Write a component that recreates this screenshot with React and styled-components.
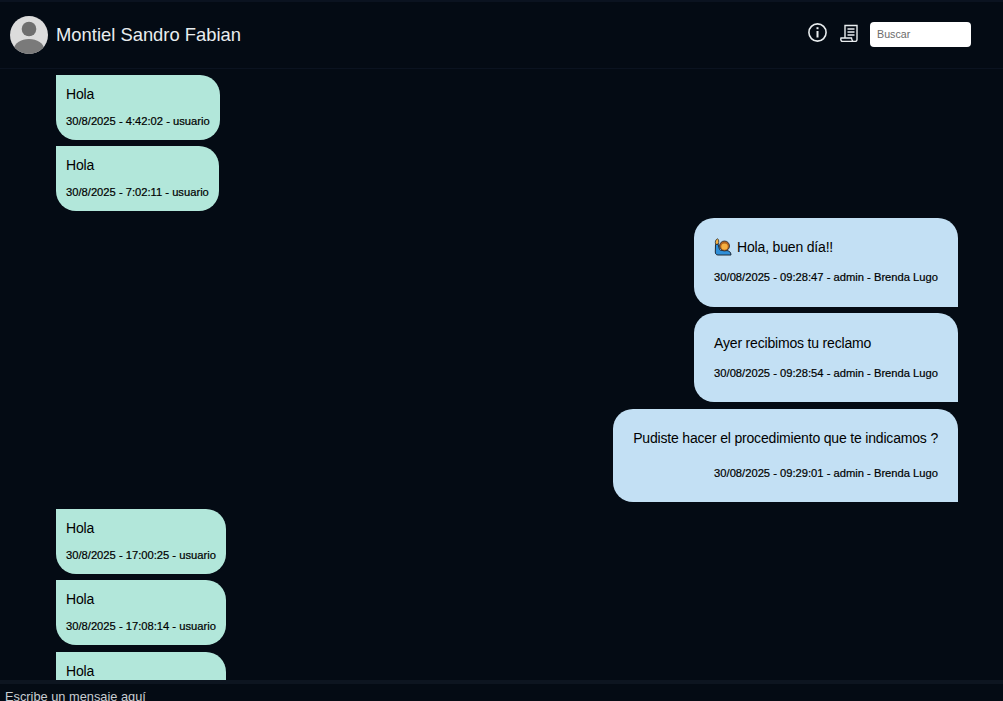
import React from "react";
import styled, { createGlobalStyle } from "styled-components";

const GlobalStyle = createGlobalStyle`
    html, body {
        margin: 0;
        padding: 0;
        height: 100%;
        overflow: hidden;
        background-color: #040b14;
        font-family: "Liberation Sans", Arial, sans-serif;
    }
`;

const Page = styled.div`
    height: 701px;
    display: flex;
    flex-direction: column;
    overflow: hidden;
    background-color: #040b14;
    border-top: 2px solid #0b1320;
    box-sizing: border-box;
`;

const Header = styled.header`
    flex: 0 0 67px;
    display: flex;
    align-items: center;
    padding: 0 32px 0 10px;
    box-sizing: border-box;
    border-bottom: 1px solid #0b1320;
`;

const Avatar = styled.svg`
    width: 38px;
    height: 38px;
    border-radius: 50%;
    margin-right: 8px;
`;

const Name = styled.h1`
    margin: 0;
    flex: 1;
    color: #e9edef;
    font-size: 18.4px;
    font-weight: 400;
`;

const IconButton = styled.span`
    display: flex;
    color: #e9edef;
    margin: 0 ${(props) => props.$right}px 5px 0;
`;

const Search = styled.input`
    width: 101px;
    height: 25px;
    margin-bottom: 2px;
    padding: 0 7px;
    box-sizing: border-box;
    background: #fff;
    border: 0;
    border-radius: 4px;
    font-family: inherit;
    font-size: 10.7px;

    &::placeholder {
        color: #6b6b6b;
        opacity: 1;
    }
`;

const Messages = styled.main`
    flex: 1;
    min-height: 0;
    overflow: hidden;
    padding: 6px 45px 0 56px;
    display: flex;
    flex-direction: column;
`;

const Bubble = styled.div`
    align-self: ${(props) => (props.$admin ? "flex-end" : "flex-start")};
    flex-shrink: 0;
    box-sizing: border-box;
    margin-top: ${(props) => props.$top || 0}px;
    padding: ${(props) => (props.$admin ? `${props.$pad || 20}px 20px 0` : "10px 10px 0")};
    height: ${(props) => props.$height || 65}px;
    background-color: ${(props) => (props.$admin ? "#c3e0f4" : "#b2e7da")};
    border-radius: ${(props) => (props.$admin ? "20px 20px 0 20px" : "0 20px 20px 20px")};
    color: #000;
`;

const Text = styled.div`
    display: flex;
    align-items: center;
    font-size: 14px;
    letter-spacing: -0.18px;
    line-height: 18px;
`;

const Meta = styled.div`
    margin-top: ${(props) => props.$gap}px;
    font-size: 11.2px;
    line-height: 12px;
    text-align: right;
    -webkit-text-stroke: 0.2px #000;
`;

const Emoji = styled.svg`
    width: 18px;
    height: 18px;
    margin-right: 5px;
`;

const Footer = styled.footer`
    flex: 0 0 21px;
    min-height: 0;
    box-sizing: border-box;
    border-top: 4px solid #0d1520;
    padding: 5px 0 0 5px;
    color: #c8cdd1;
    font-size: 12.8px;
    line-height: 16px;
    white-space: nowrap;
`;

const userBefore = [
    { text: "Hola", meta: "30/8/2025 - 4:42:02 - usuario" },
    { text: "Hola", meta: "30/8/2025 - 7:02:11 - usuario", top: 6 },
];

const userAfter = [
    { text: "Hola", meta: "30/8/2025 - 17:00:25 - usuario", top: 7 },
    { text: "Hola", meta: "30/8/2025 - 17:08:14 - usuario", top: 6 },
    { text: "Hola", meta: "30/8/2025 - 17:10:40 - usuario", top: 7 },
];

const UserBubble = ({ item }) => (
    <Bubble $top={item.top}>
        <Text>{item.text}</Text>
        <Meta $gap={12}>{item.meta}</Meta>
    </Bubble>
);

const App = () => {
    return (
        <Page>
            <GlobalStyle />
            <Header>
                <Avatar viewBox="0 0 38 38">
                    <rect width="38" height="38" fill="#dcdcdc" />
                    <circle cx="19" cy="13" r="7.3" fill="#6f6f6f" />
                    <ellipse cx="19" cy="33" rx="15" ry="10" fill="#7a7a7a" />
                </Avatar>
                <Name>Montiel Sandro Fabian</Name>
                <IconButton $right={13}>
                    <svg width="19" height="19" viewBox="0 0 19 19" fill="none" stroke="currentColor">
                        <circle cx="9.5" cy="9.5" r="8.6" strokeWidth="1.6" />
                        <path d="M9.5 8v6.500" strokeWidth="2" />
                        <path d="M9.500 4.200v2" strokeWidth="2" />
                    </svg>
                </IconButton>
                <IconButton $right={12}>
                    <svg width="18" height="18" viewBox="0 0 18 18" fill="none" stroke="currentColor" strokeWidth="1.4">
                        <path d="M5 13.500V1.500h12v14c0 1-.8 2-2 2H2.500c-1.500 0-2-2-1.500-3.500h10.500c.2 1.500.7 2.500 1.500 3.500" />
                        <path d="M7.500 5h7M7.500 8h7M7.500 11h7" />
                    </svg>
                </IconButton>
                <Search placeholder="Buscar" />
            </Header>
            <Messages>
                {userBefore.map((item, i) => (
                    <UserBubble item={item} key={i} />
                ))}
                <Bubble $admin $top={7} $height={89}>
                    <Text>
                        <Emoji viewBox="0 0 18 18">
                            <path d="M1.500 6.500l2.500-.5 1.500 5.500c.5 1 1.500 1 2.500 1h4c3 0 5 1.500 5 4.500H4c-2 0-2.700-1.500-2.700-3z" fill="#2f8fd8" stroke="#1d2a38" />
                            <path d="M1.700 6.500C.8 4 1.500 1.500 3.500.8 5 1 5 4.500 4.300 6z" fill="#f5b041" stroke="#1d2a38" strokeWidth=".8" />
                            <circle cx="10.500" cy="8" r="5" fill="#b5651d" stroke="#1d2a38" strokeWidth=".8" />
                            <circle cx="10.500" cy="8.600" r="3.200" fill="#f5b041" />
                        </Emoji>
                        Hola, buen día!!
                    </Text>
                    <Meta $gap={15}>30/08/2025 - 09:28:47 - admin - Brenda Lugo</Meta>
                </Bubble>
                <Bubble $admin $top={6} $height={89} $pad={21}>
                    <Text>Ayer recibimos tu reclamo</Text>
                    <Meta $gap={15}>30/08/2025 - 09:28:54 - admin - Brenda Lugo</Meta>
                </Bubble>
                <Bubble $admin $top={7} $height={93}>
                    <Text>Pudiste hacer el procedimiento que te indicamos ?</Text>
                    <Meta $gap={20}>30/08/2025 - 09:29:01 - admin - Brenda Lugo</Meta>
                </Bubble>
                {userAfter.map((item, i) => (
                    <UserBubble item={item} key={i} />
                ))}
            </Messages>
            <Footer>Escribe un mensaje aquí</Footer>
        </Page>
    );
};

export default App;
